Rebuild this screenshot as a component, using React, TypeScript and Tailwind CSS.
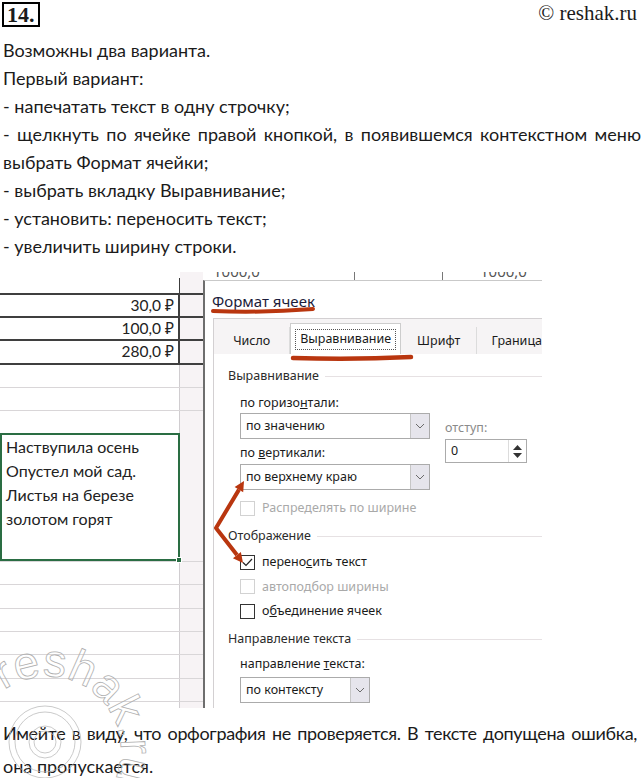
import React from 'react'

const Chevron = () => (
  <svg width="10" height="6" viewBox="0 0 10 6" fill="none">
    <path d="M1 1l4 4 4-4" stroke="#6b6b6b" strokeWidth="1" />
  </svg>
)

function Select({ w, text }: { w: string; text: string }) {
  return (
    <div className={`flex h-[26px] border border-[#ababab] bg-white ${w}`}>
      <div className="flex flex-1 items-center pl-[5px] text-[#1a1a1a]">{text}</div>
      <div className="flex w-[19px] items-center justify-center border-l border-[#c6c6c6] bg-[#e6e5ec]">
        <Chevron />
      </div>
    </div>
  )
}

function Box({ checked = false, disabled = false, children }: { checked?: boolean; disabled?: boolean; children: React.ReactNode }) {
  return (
    <div className="flex h-[16px] items-center">
      <div
        className={`flex h-[15px] w-[15px] items-center justify-center border bg-white ${
          disabled ? 'border-[#d2d2d2]' : 'border-[#333]'
        }`}
      >
        {checked && (
          <svg width="11" height="9" viewBox="0 0 11 9" fill="none">
            <path d="M1 4.5l3 3 6-6.5" stroke="#222" strokeWidth="1.2" />
          </svg>
        )}
      </div>
      <span className={`ml-[7px] ${disabled ? 'text-[#a9a9a9]' : 'text-[#1a1a1a]'}`}>{children}</span>
    </div>
  )
}

function Group({ title }: { title: string }) {
  return (
    <div className="flex h-[16px] items-center gap-[6px] text-[#2b2b2b]">
      <span>{title}</span>
      <div className="h-px flex-1 bg-[#e6e1e3]" />
    </div>
  )
}

const darkRows = ['30,0 ₽', '100,0 ₽', '280,0 ₽']
const lightTop = [24, 23, 23]
const lightBottom = [23, 24, 23, 23, 24, 23, 7]

function Sheet() {
  return (
    <div className="flex w-[203px] flex-col font-['Lato','Noto_Sans',sans-serif] text-[15.5px] text-[#222]">
      <div className="flex h-[21px]">
        <div className="w-[180px]">
          <div className="ml-auto mt-[6px] h-[15px] w-px bg-[#3c3c3c]" />
        </div>
        <div className="flex-1 bg-[#f7f3f5]" />
      </div>
      {darkRows.map((v, i) => (
        <div key={v} className={`flex border-t-2 border-[#3f3f3f] ${i === 2 ? 'h-[24px]' : 'h-[23px]'}`}>
          <div className="flex w-[180px] items-center justify-end border-r-2 border-[#3f3f3f] pr-[4px]">{v}</div>
          <div className="flex-1 bg-[#f7f3f5]" />
        </div>
      ))}
      {lightTop.map((h, i) => (
        <div
          key={i}
          className={`flex border-t border-[#d9d6d8] ${i === 0 ? 'h-[24px] border-t-2 border-t-[#3f3f3f]' : 'h-[23px]'}`}
        >
          <div className="w-[180px] border-r border-[#d0cdd0]" />
          <div className="flex-1 bg-[#f7f3f5]" />
        </div>
      ))}
      <div className="flex h-[128px]">
        <div className="relative w-[180px] border-2 border-[#2a6d43] pl-[4px] text-[16px] leading-[24px]">
          <div>Наствупила осень</div>
          <div>Опустел мой сад.</div>
          <div>Листья на березе</div>
          <div>золотом горят</div>
          <div className="absolute -bottom-[4px] -right-[4px] h-[6px] w-[6px] border border-white bg-[#2a6d43]" />
        </div>
        <div className="flex-1 bg-[#f7f3f5]" />
      </div>
      {lightBottom.map((h, i) => (
        <div key={i} className={`flex border-t border-[#d9d6d8] ${h === 24 ? 'h-[24px]' : h === 23 ? 'h-[23px]' : 'h-[7px]'}`}>
          <div className="w-[180px] border-r border-[#d0cdd0]" />
          <div className="flex-1 bg-[#f7f3f5]" />
        </div>
      ))}
    </div>
  )
}

function Dialog() {
  return (
    <div className="flex w-[339px] flex-col overflow-hidden font-['Noto_Sans',sans-serif] text-[12.5px] leading-[16px]">
      <div className="flex h-[8px] overflow-hidden text-[15px] leading-none text-[#555]">
        <div className="w-[152px] border-r border-[#777] pl-[10px]">
          <div className="-mt-[8px]">1000,0</div>
        </div>
        <div className="w-[88px] border-r border-[#777]" />
        <div className="pl-[37px]">
          <div className="-mt-[8px]">1000,0</div>
        </div>
      </div>
      <div className="flex flex-1 flex-col border-l-2 border-t border-l-[#6e6e6e] border-t-[#c9c9c9] bg-white">
        <div className="h-[37px] pl-[7px] pt-[11px] text-[15px] leading-[18px] text-[#1c1c3a]">Формат ячеек</div>
        <div className="ml-[8px] flex flex-1 flex-col border-l border-t border-[#d3d0d2]">
          <div className="flex h-[35px] items-end bg-[#f6f4f5] text-[#1a1a1a]">
            <div className="flex h-[27px] w-[78px] items-center justify-center border-r border-[#dcdcdc]">Число</div>
            <div className="flex h-[31px] w-[113px] items-center justify-center border border-b-0 border-[#cdcdcd] bg-white">
              <div className="flex h-[21px] items-center border border-dotted border-[#555] px-[4px]">Выравнивание</div>
            </div>
            <div className="flex h-[27px] w-[78px] items-center justify-center border-r border-[#dcdcdc]">Шрифт</div>
            <div className="flex h-[27px] items-center whitespace-nowrap pl-[14px]">Граница</div>
          </div>
          <div className="flex-1 bg-white pl-[14px] pt-[14px]">
            <Group title="Выравнивание" />
            <div className="ml-[12px] mt-[11px] flex gap-[15px]">
              <div className="flex w-[190px] flex-col">
                <div className="h-[16px] text-[#1a1a1a]">
                  по горизо<u>н</u>тали:
                </div>
                <div className="mt-[2px]">
                  <Select w="w-[190px]" text="по значению" />
                </div>
                <div className="mt-[6px] h-[16px] text-[#1a1a1a]">
                  по <u>в</u>ертикали:
                </div>
                <div className="mt-[3px]">
                  <Select w="w-[190px]" text="по верхнему краю" />
                </div>
              </div>
              <div className="flex flex-col pt-[25px]">
                <div className="h-[16px] text-[#8a8a8a]">отступ:</div>
                <div className="mt-[3px] flex h-[24px] w-[82px] border border-[#ababab] bg-white">
                  <div className="flex flex-1 items-center pl-[5px] text-[#1a1a1a]">0</div>
                  <div className="flex w-[18px] flex-col items-center justify-center gap-[3px] border-l border-[#dcdcdc]">
                    <svg width="9" height="5" viewBox="0 0 9 5">
                      <path d="M4.5 0L9 5H0z" fill="#333" />
                    </svg>
                    <svg width="9" height="5" viewBox="0 0 9 5">
                      <path d="M0 0h9L4.5 5z" fill="#333" />
                    </svg>
                  </div>
                </div>
              </div>
            </div>
            <div className="ml-[12px] mt-[10px]">
              <Box disabled>Распределять по ширине</Box>
            </div>
            <div className="mt-[12px]">
              <Group title="Отображение" />
            </div>
            <div className="ml-[12px] mt-[10px] flex flex-col gap-[8.5px]">
              <Box checked>
                перено<u>с</u>ить текст
              </Box>
              <Box disabled>автоподбор ширины</Box>
              <Box>
                о<u>б</u>ъединение ячеек
              </Box>
            </div>
            <div className="mt-[12px]">
              <Group title="Направление текста" />
            </div>
            <div className="ml-[12px] mt-[9px] h-[16px] text-[#1a1a1a]">
              направление <u>т</u>екста:
            </div>
            <div className="ml-[12px] mt-[5px]">
              <Select w="w-[130px]" text="по контексту" />
            </div>
          </div>
        </div>
      </div>
    </div>
  )
}

export default function App() {
  const red = '#b9360f'
  return (
    <div className="relative h-[778px] w-[641px] overflow-hidden bg-white text-[#1b1b1b]">
      <header className="flex h-[36px] items-start justify-between">
        <div className="ml-[2px] mt-[2px] flex h-[25px] items-center border-2 border-black px-[3px] font-['Liberation_Serif',serif] text-[22px] font-bold leading-none">
          14.
        </div>
        <div className="mr-[4px] mt-[3px] font-['Liberation_Serif',serif] text-[21px] leading-none">© reshak.ru</div>
      </header>

      <div className="pl-[3px] font-['Lato',sans-serif] text-[18px] leading-[28px]">
        <p>Возможны два варианта.</p>
        <p>Первый вариант:</p>
        <p>- напечатать текст в одну строчку;</p>
        <p className="text-justify">
          - щелкнуть по ячейке правой кнопкой, в появившемся контекстном меню выбрать Формат ячейки;
        </p>
        <p>- выбрать вкладку Выравнивание;</p>
        <p>- установить: переносить текст;</p>
        <p>- увеличить ширину строки.</p>
      </div>

      <section className="mt-[12px] flex h-[436px]">
        <Sheet />
        <Dialog />
      </section>

      <div className="mt-[9px] pl-[3px] pr-[4px] font-['Lato',sans-serif] text-[18px] leading-[33px]">
        <p className="whitespace-nowrap tracking-[-0.35px] [text-align-last:justify] text-justify">
          Имейте в виду, что орфография не проверяется. В тексте допущена ошибка,
        </p>
        <p>она пропускается.</p>
      </div>

      {/* annotations drawn over the screenshot */}
      <svg className="pointer-events-none absolute inset-0" width="641" height="778" viewBox="0 0 641 778">
        <path d="M213 311 Q262 313 313 309" stroke={red} strokeWidth="4" strokeLinecap="round" fill="none" />
        <path d="M293 358 Q352 360 411 357" stroke={red} strokeWidth="4.5" strokeLinecap="round" fill="none" />
        <path d="M239 489.6 L216 528 L237 555" stroke={red} strokeWidth="4" strokeLinejoin="round" fill="none" />
        <polygon points="244,481 243.2,492.2 234.6,487" fill={red} />
        <polygon points="243,563 240.9,552 232.9,558.2" fill={red} />
      </svg>

      {/* watermark */}
      <svg className="pointer-events-none absolute inset-0" width="641" height="778" viewBox="0 0 641 778">
        <defs>
          <path id="wm-arc" d="M4 690 A74 74 0 0 1 108 792" />
        </defs>
        <text
          fontFamily="Liberation Sans, sans-serif"
          fontSize="46"
          fill="none"
          stroke="#b0b0b0"
          strokeWidth="0.8"
        >
          <textPath href="#wm-arc">reshak.ru</textPath>
        </text>
        <circle cx="45" cy="742" r="36" fill="none" stroke="#bdbdbd" strokeWidth="0.8" />
        <circle cx="45" cy="742" r="30" fill="none" stroke="#bdbdbd" strokeWidth="0.8" />
        <circle cx="45" cy="742" r="16" fill="none" stroke="#bdbdbd" strokeWidth="0.8" />
        <circle cx="45" cy="742" r="11" fill="none" stroke="#bdbdbd" strokeWidth="0.8" />
      </svg>
    </div>
  )
}
